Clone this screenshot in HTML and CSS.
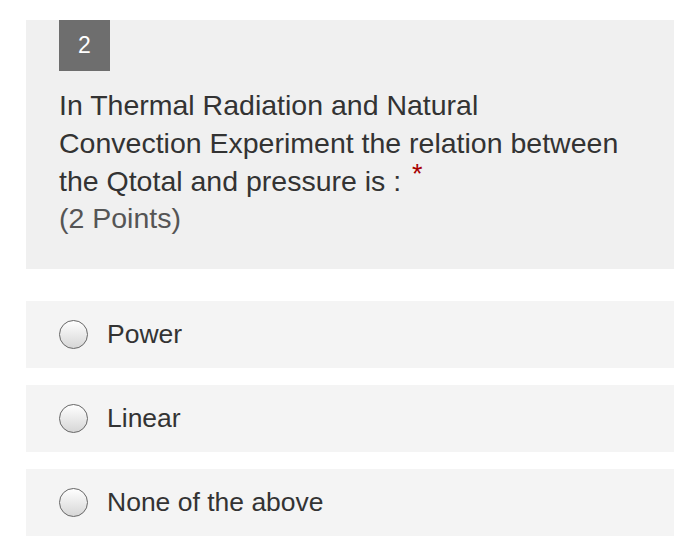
FILE: index.html
```html
<!DOCTYPE html>
<html>
<head>
<meta charset="utf-8">
<link rel="stylesheet" href="styles.css">
</head>
<body>
<div class="page">
  <div class="question">
    <div class="badge">2</div>
    <div class="title">In Thermal Radiation and Natural<br>Convection Experiment the relation between<br>the Qtotal and pressure is : <span class="req">*</span></div>
    <div class="points">(2 Points)</div>
  </div>
  <div class="options">
    <label class="option"><span class="radio"></span><span class="label">Power</span></label>
    <label class="option"><span class="radio"></span><span class="label">Linear</span></label>
    <label class="option"><span class="radio"></span><span class="label">None of the above</span></label>
  </div>
</div>
</body>
</html>
```
FILE: styles.css
```css
html, body {
  margin: 0;
  padding: 0;
  background: #ffffff;
}
body {
  font-family: "Liberation Sans", Arial, sans-serif;
  color: #333333;
}
.page {
  padding: 20px 26px 0 26px;
}
.question {
  background: #f0f0f0;
  padding: 0 20px 32px 33px;
}
.badge {
  width: 51px;
  height: 51px;
  background: #6e6e6e;
  color: #ffffff;
  font-size: 23px;
  display: flex;
  align-items: center;
  justify-content: center;
}
.title {
  margin-top: 15px;
  font-size: 28.5px;
  line-height: 38px;
  white-space: nowrap;
}
.req {
  color: #a80000;
  font-size: 27px;
  margin-left: 3px;
  vertical-align: 8px;
  line-height: 0;
}
.points {
  font-size: 28.5px;
  line-height: 37px;
  color: #555555;
}
.options {
  margin-top: 32px;
  display: flex;
  flex-direction: column;
  gap: 17px;
}
.option {
  background: #f4f4f4;
  height: 67px;
  display: flex;
  align-items: center;
  padding-left: 33px;
  gap: 19px;
}
.radio {
  width: 27px;
  height: 27px;
  border-radius: 50%;
  border: 1.5px solid #666666;
  background: linear-gradient(#ffffff, #d6d6d6);
  flex: none;
}
.label {
  font-size: 26.5px;
}
```
